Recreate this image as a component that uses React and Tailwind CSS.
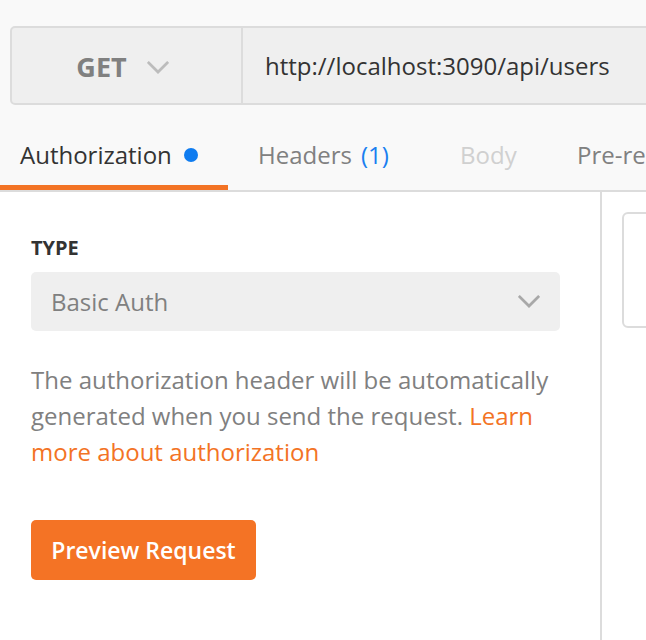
import React from 'react';

const Chevron = ({ className }) => (
  <svg className={className} viewBox="0 0 24 14" fill="none" stroke="currentColor" strokeWidth="3" strokeLinecap="square">
    <path d="M2 2 L12 12 L22 2" />
  </svg>
);

export default function App() {
  return (
    <div className="w-[646px] h-[640px] overflow-hidden bg-white text-[#333]" style={{ fontFamily: '"Open Sans", "Liberation Sans", sans-serif' }}>
      {/* request bar */}
      <div className="bg-[#f9f9f9] pt-[26px] pl-[10px]">
        <div className="flex h-[79px] w-[700px] bg-[#efefef] border-2 border-[#dcdcdc] rounded-l-[5px]">
          <div className="w-[231px] flex items-center justify-center gap-[20px] border-r-2 border-[#dcdcdc] pr-[20px] pl-[12px] pt-[3px]">
            <span className="text-[27px] font-bold text-[#808080]">GET</span>
            <Chevron className="w-[22px] h-[13px] text-[#bcbcbc]" />
          </div>
          <div className="flex items-center pl-[22px] text-[24px] text-[#333]">
            http://localhost:3090/api/users
          </div>
        </div>

        {/* tabs */}
        <div className="flex h-[87px] -ml-[10px] border-b-2 border-[#dcdcdc] text-[24px] overflow-hidden">
          <div className="shrink-0 w-[228px] pl-[20px] pt-[20px] flex items-center border-b-[5px] border-[#f37325]">
            <span className="text-[#333]">Authorization</span>
            <span className="ml-[12px] w-[14px] h-[14px] rounded-full bg-[#0f7cf0]" />
          </div>
          <div className="shrink-0 w-[202px] pl-[30px] pt-[20px] pb-[5px] flex items-center text-[#808080] whitespace-nowrap">
            Headers <span className="ml-[9px] text-[#1a7ff0]">(1)</span>
          </div>
          <div className="shrink-0 w-[117px] pl-[30px] pt-[20px] pb-[5px] flex items-center text-[#d0d0d0]">Body</div>
          <div className="shrink-0 pl-[30px] pt-[20px] pb-[5px] flex items-center text-[#808080] whitespace-nowrap">Pre-request Script</div>
        </div>
      </div>

      {/* body */}
      <div className="flex h-[450px]">
        <div className="w-[602px] shrink-0 border-r-2 border-[#dcdcdc] pl-[31px] pr-[40px] pt-[44px]">
          <div className="text-[20px] font-bold leading-[24px] text-[#333]">TYPE</div>
          <div className="mt-[12px] w-[529px] h-[59px] rounded-[5px] bg-[#efefef] flex items-center justify-between pl-[20px] pr-[20px]">
            <span className="text-[24px] text-[#808080]">Basic Auth</span>
            <Chevron className="w-[22px] h-[13px] text-[#a8a8a8]" />
          </div>
          <p className="mt-[31px] text-[24px] leading-[36px] text-[#808080]">
            The authorization header will be automatically generated when you send the request.{' '}
            <span className="text-[#f37325]">Learn more about authorization</span>
          </p>
          <button className="mt-[50px] w-[225px] h-[60px] rounded-[5px] bg-[#f47325] text-white text-[23px] font-semibold">
            Preview Request
          </button>
        </div>
        <div className="flex-1 pl-[20px] pt-[20px]">
          <div className="h-[116px] w-[100px] border-2 border-[#dcdcdc] rounded-[6px]" />
        </div>
      </div>
    </div>
  );
}
